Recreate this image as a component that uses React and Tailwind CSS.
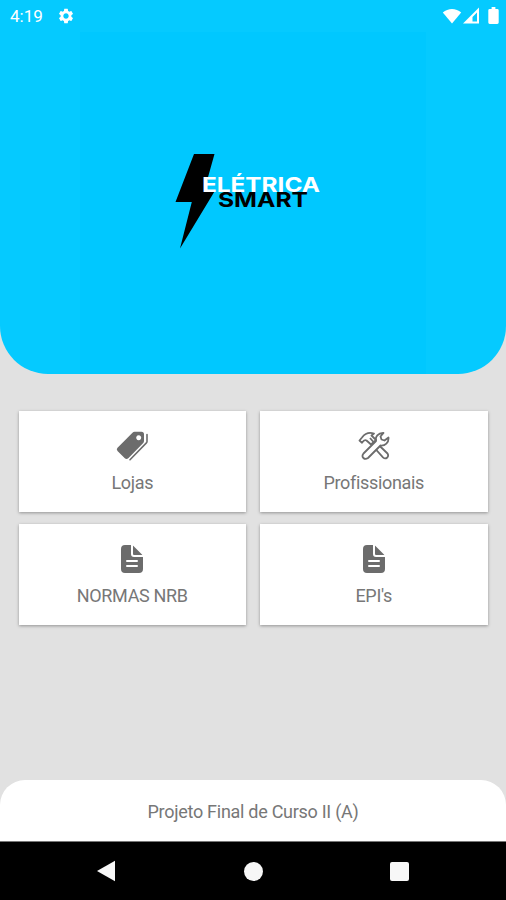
import { IoDocumentText } from "react-icons/io5";
import { MdSettings } from "react-icons/md";

function TagsIcon() {
  return (
    <svg width="32" height="30" viewBox="0 0 32 30">
      <path
        fillRule="evenodd"
        d="M18.500 .8H25.500Q28 .8 28 3.300V10Q28 11.200 27 12.200L12.300 27.200Q10.500 28.800 8.800 27.200L1.500 20Q0 18.400 1.500 16.800L16.500 1.700Q17.400 .8 18.500 .8ZM22.700 4.200a2.500 2.500 0 1 0 .01 0Z"
        fill="#6c6c6c"
      />
      <path d="M31 3.500V10.500Q31 11.300 30.400 11.900L14 28.800" fill="none" stroke="#6c6c6c" strokeWidth="1.600" strokeLinecap="round" />
    </svg>
  );
}

function ToolsIcon() {
  return (
    <svg width="32" height="30" viewBox="0 0 32 30" fill="#fff" stroke="#6c6c6c" strokeWidth="1.8" strokeLinejoin="round">
      <path d="M12 12L15 8.500 29.500 22.500C31.500 26 27.800 29 25 26.300Z" />
      <path d="M18 10C17 6 20 1.800 25.500 2L22.500 5.500 23.500 8.500 26.500 9.500 30.500 6.500C31 11.500 27 15 22.500 14.500L10 27C6.500 29.500 2.800 26 5.500 22.500Z" />
      <path d="M1.500 9.500L4 6.500C7 2.500 11 1 16 2.500L13.500 4.500 18 9 13 13.500 8.500 9.500C6.800 8.500 5.500 9.500 4 11.800Z" />
      <path d="M12 7L15.500 11" />
    </svg>
  );
}

function Logo() {
  return (
    <svg width="150" height="100" viewBox="173 151 150 100">
      <path d="M194 154H214.500L204 191.500H214.500L180 248.500L191.800 202H175.500Z" fill="#000" />
      <g fontFamily="Inter, sans-serif" fontWeight="700" fontSize="20">
        <text x="202" y="191.800" textLength="118" lengthAdjust="spacingAndGlyphs" fill="#fff">ELÉTRICA</text>
        <text x="218" y="207.200" textLength="90" lengthAdjust="spacingAndGlyphs" fill="#000">SMART</text>
      </g>
    </svg>
  );
}

function StatusBar() {
  return (
    <div className="flex h-8 items-center pl-[10px] pr-[7px] text-white">
      <span className="text-[17px] leading-8">4:19</span>
      <MdSettings className="ml-[14px]" size={18} />
      <div className="-mt-[1px] ml-auto flex items-center">
        <svg width="20" height="16" viewBox="0 0 20 16" fill="#fff">
          <path d="M.8 4.500C6-.2 14-.2 19.200 4.500L10 15.500z" />
        </svg>
        <svg className="ml-[1px]" width="17" height="17" viewBox="0 0 17 17">
          <path d="M0 16.500L16 .5v16z" fill="#fff" />
          <path d="M9.500 14.500V10l4.500-4.500v9z" fill="#05c9ff" />
        </svg>
        <svg className="ml-[8px]" width="11" height="17" viewBox="0 0 11 18" fill="#fff">
          <path d="M3.500 0h4v2H9.500q1.500 0 1.500 1.500v13q0 1.500-1.500 1.500h-8Q0 18 0 16.500v-13Q0 2 1.500 2h2z" />
        </svg>
      </div>
    </div>
  );
}

function Card({ icon, label }) {
  return (
    <div className="flex h-[101px] flex-col items-center bg-white pt-[19px] shadow-[0_1px_3px_rgba(0,0,0,0.35)]">
      <div className="flex h-8 items-center text-[#6c6c6c]">{icon}</div>
      <span className="mt-[9px] text-[18px] leading-6 tracking-[-0.32px]">{label}</span>
    </div>
  );
}

export default function App() {
  return (
    <div className="flex h-[900px] w-[506px] flex-col overflow-hidden bg-[#e1e1e1] font-['Roboto',sans-serif] text-[#777]">
      <header className="flex h-[374px] shrink-0 flex-col rounded-b-[48px] bg-[#05caff]">
        <StatusBar />
        <div className="mx-auto flex w-[346px] flex-1 justify-center bg-[#00c8ff] pt-[119px]">
          <div className="-ml-[10px]">
            <Logo />
          </div>
        </div>
      </header>

      <main className="mt-[37px] grid grid-cols-2 gap-x-[14px] gap-y-[12px] px-[18.500px]">
        <Card icon={<TagsIcon />} label="Lojas" />
        <Card icon={<ToolsIcon />} label="Profissionais" />
        <Card icon={<IoDocumentText size={32} />} label="NORMAS NRB" />
        <Card icon={<IoDocumentText size={32} />} label="EPI's" />
      </main>

      <footer className="mt-auto">
        <div className="flex h-[61px] items-center justify-center rounded-t-[25px] bg-white pt-[2px] text-[18px] tracking-[-0.28px]">
          Projeto Final de Curso II (A)
        </div>
        <nav className="grid h-[59px] grid-cols-3 items-center border-t border-[#777] bg-black px-[34px]">
          <svg className="mx-auto -translate-x-px" width="20" height="22" viewBox="0 0 20 22" fill="#f7f7f7">
            <path d="M1 11L19 .8v20.400z" />
          </svg>
          <span className="mx-auto h-[19px] w-[19px] rounded-full bg-[#f7f7f7]" />
          <span className="mx-auto h-[19px] w-[19px] rounded-[2px] bg-[#f7f7f7]" />
        </nav>
      </footer>
    </div>
  );
}
